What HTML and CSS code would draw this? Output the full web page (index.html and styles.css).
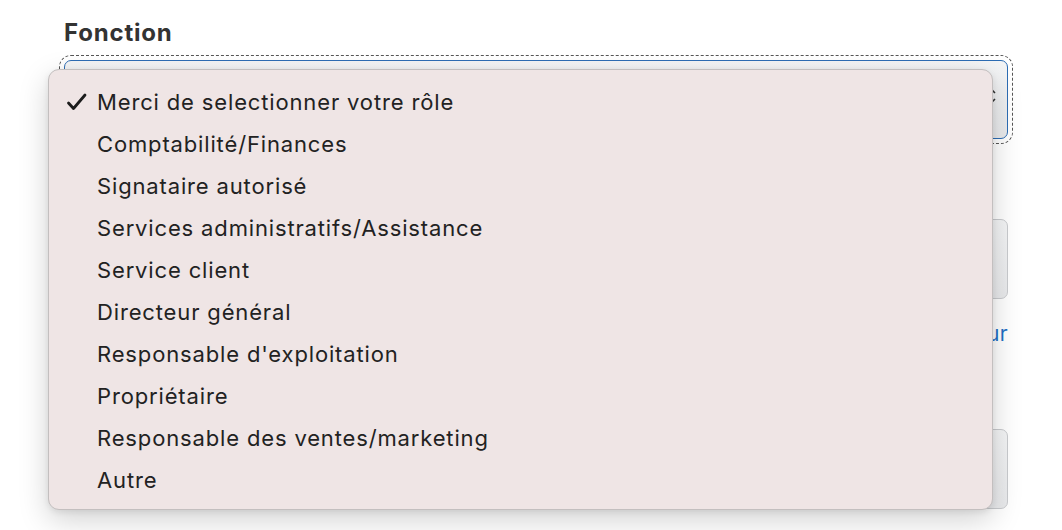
FILE: index.html
```html
<!DOCTYPE html>
<html lang="fr">
<head>
<meta charset="utf-8">
<link rel="stylesheet" href="styles.css">
</head>
<body>
<div class="form">
  <div class="label">Fonction</div>
  <div class="select focused">
    <svg class="chev" width="12" height="20" viewBox="0 0 12 20"><path d="M2 7 L6 3 L10 7 M2 13 L6 17 L10 13" fill="none" stroke="#333" stroke-width="1.6"/></svg>
  </div>
  <div class="gap1"></div>
  <div class="select plain"></div>
  <div class="link-row"><a class="link">Ajouter un autre utilisateur</a></div>
  <div class="select plain"></div>

  <ul class="menu">
    <li class="item checked"><svg class="check" width="22" height="18" viewBox="0 0 22 18"><path d="M2.5 10 L7.5 15.5 L19 2" fill="none" stroke="#1c1c1c" stroke-width="2.8" stroke-linecap="round" stroke-linejoin="round"/></svg>Merci de selectionner votre rôle</li>
    <li class="item">Comptabilité/Finances</li>
    <li class="item">Signataire autorisé</li>
    <li class="item">Services administratifs/Assistance</li>
    <li class="item">Service client</li>
    <li class="item">Directeur général</li>
    <li class="item">Responsable d'exploitation</li>
    <li class="item">Propriétaire</li>
    <li class="item">Responsable des ventes/marketing</li>
    <li class="item">Autre</li>
  </ul>
</div>
</body>
</html>
```
FILE: styles.css
```css
html, body { margin: 0; padding: 0; background: #fff; }
body { font-family: Inter, "Liberation Sans", Arial, sans-serif; width: 1062px; height: 530px; overflow: hidden; }
.form { position: relative; padding: 20px 54px 0 64px; }
.label { font-weight: 700; font-size: 24px; color: #333; line-height: 26px; height: 26px; letter-spacing: 0.8px; }
.select { position: relative; height: 77px; border-radius: 7px; box-sizing: border-box; background: linear-gradient(#f4f5f6, #e9eaec); }
.focused { margin-top: 14px; height: 79px; border: 1.5px solid #2d6db4; outline: 1px dashed #555; outline-offset: 4px; }
.chev { position: absolute; right: 10px; top: 25px; }
.plain { border: 1px solid #c9cbce; height: 80px; }
.gap1 { height: 80px; }
.link-row { height: 130px; text-align: right; }
.link { color: #1f6fc5; font-size: 21px; line-height: 70px; letter-spacing: 0.3px; }
.menu {
  position: absolute; left: 48px; top: 69px; width: 945px; height: 441px;
  margin: 0; padding: 11px 0 0 0; list-style: none; box-sizing: border-box;
  background: #efe5e5; border: 1px solid #c3bfbf; border-radius: 11px;
  box-shadow: 0 10px 30px rgba(0,0,0,0.18), 0 2px 6px rgba(0,0,0,0.08);
}
.item { position: relative; height: 42px; line-height: 42px; padding-left: 48px; font-size: 22px; letter-spacing: 0.85px; color: #222; }
.check { position: absolute; left: 17px; top: 12px; }
```
